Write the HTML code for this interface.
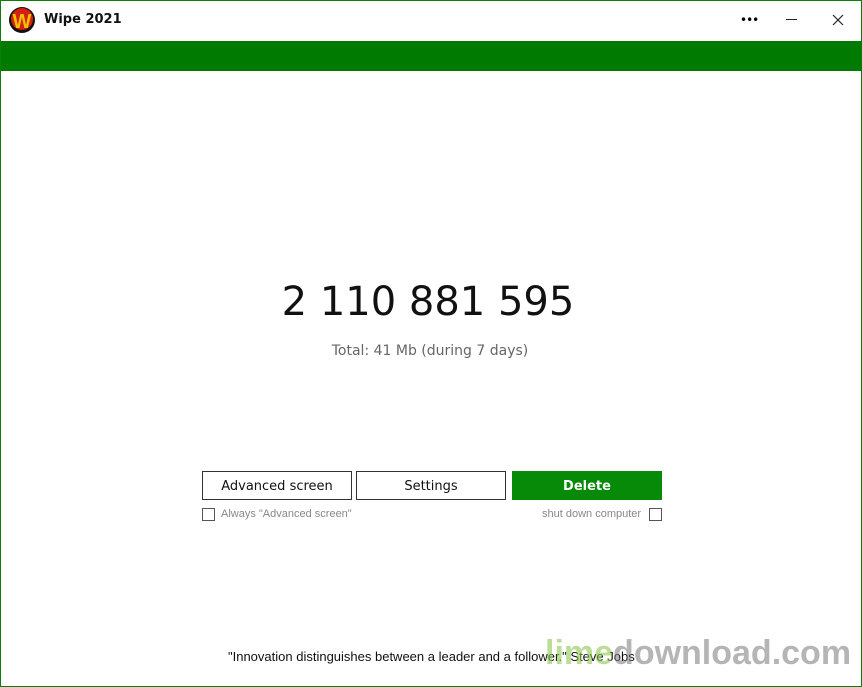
<!DOCTYPE html>
<html><head><style>
body{margin:0;width:862px;height:687px;overflow:hidden;background:#fff;font-family:"DejaVu Sans","Liberation Sans",sans-serif;position:relative}
.frame{position:absolute;left:0;top:0;width:860px;height:685px;border:1px solid #0a7f0a}
.abs{position:absolute}
.btn{position:absolute;top:471px;height:29px;width:148px;border:1px solid #333;box-sizing:border-box;background:#fff;font-size:13px;text-align:center;line-height:30px;color:#111}
.cb{position:absolute;width:11px;height:11px;border:1px solid #555;top:508px}
.lbl{position:absolute;top:508px;font-size:11px;color:#888;font-family:"Liberation Sans",sans-serif}
</style></head><body>
<div class="frame"></div>
<svg class="abs" style="left:8px;top:6px" width="28" height="28" viewBox="0 0 28 28">
<circle cx="14" cy="14" r="13" fill="#111"/><circle cx="14" cy="13" r="11" fill="#d42010"/>
<text x="14" y="22" text-anchor="middle" font-family="Liberation Sans" font-weight="bold" font-size="20" fill="#f5c000">W</text></svg>
<div class="abs" style="left:44px;top:12px;font-size:13px;font-weight:bold;color:#111">Wipe 2021</div>
<div class="abs" style="left:740px;top:13px;font-size:12px;letter-spacing:-1px">•••</div>
<div class="abs" style="left:786px;top:19px;width:11px;height:1px;background:#222"></div>
<svg class="abs" style="left:832px;top:14px" width="12" height="12"><path d="M1 1L11 11M11 1L1 11" stroke="#222" stroke-width="1.2"/></svg>
<div class="abs" style="left:1px;top:41px;width:860px;height:30px;background:#007a00"></div>
<div class="abs" style="left:0;width:856px;top:279px;text-align:center;font-size:40px;color:#111">2 110 881 595</div>
<div class="abs" style="left:0;width:860px;top:343px;text-align:center;font-size:14px;color:#666">Total: 41 Mb (during 7 days)</div>
<div class="btn" style="left:202px;width:150px">Advanced screen</div>
<div class="btn" style="left:356px;width:150px">Settings</div>
<div class="btn" style="left:512px;width:150px;background:#078a07;border-color:#078a07;color:#fff;font-weight:bold">Delete</div>
<div class="cb" style="left:202px"></div>
<div class="lbl" style="left:221px">Always "Advanced screen"</div>
<div class="lbl" style="left:542px">shut down computer</div>
<div class="cb" style="left:649px"></div>
<div class="abs" style="left:228px;top:649px;font-size:13px;color:#111;font-family:'Liberation Sans',sans-serif">"Innovation distinguishes between a leader and a follower." Steve Jobs</div>
<div class="abs" style="left:545px;top:634px;font-size:34px;font-weight:bold;font-family:'Liberation Sans',sans-serif;color:rgba(120,120,120,0.55)"><span style="color:rgba(140,200,80,0.6)">lime</span>download.com</div>
</body></html>
